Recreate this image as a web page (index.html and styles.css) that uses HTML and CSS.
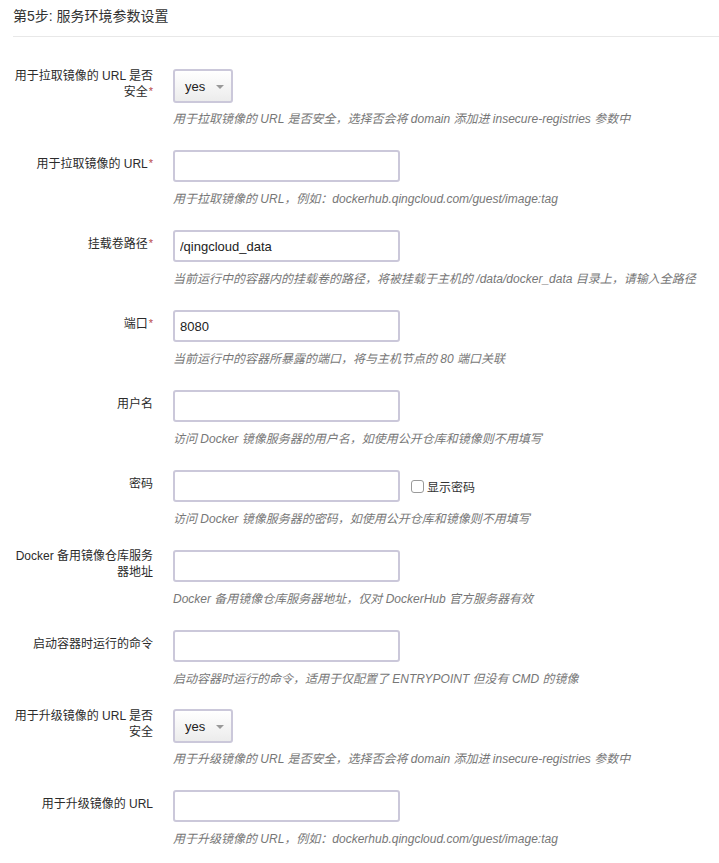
FILE: index.html
```html
<!DOCTYPE html>
<html lang="zh">
<head>
<meta charset="utf-8">
<title>第5步: 服务环境参数设置</title>
<link rel="stylesheet" href="styles.css">
</head>
<body>
<div class="page">
  <h3 class="step-title">第5步: 服务环境参数设置</h3>
  <div class="form">
    <div class="row">
      <label class="label"><span>用于拉取镜像的 URL 是否安全<span class="req">*</span></span></label>
      <div class="control">
        <div class="select"><span>yes</span><span class="caret"></span></div>
        <p class="help">用于拉取镜像的 URL 是否安全，选择否会将 domain 添加进 insecure-registries 参数中</p>
      </div>
    </div>
    <div class="row">
      <label class="label"><span>用于拉取镜像的 URL<span class="req">*</span></span></label>
      <div class="control">
        <input class="input" type="text" value="">
        <p class="help">用于拉取镜像的 URL，例如：dockerhub.qingcloud.com/guest/image:tag</p>
      </div>
    </div>
    <div class="row">
      <label class="label"><span>挂载卷路径<span class="req">*</span></span></label>
      <div class="control">
        <input class="input" type="text" value="/qingcloud_data">
        <p class="help">当前运行中的容器内的挂载卷的路径，将被挂载于主机的 /data/docker_data 目录上，请输入全路径</p>
      </div>
    </div>
    <div class="row">
      <label class="label"><span>端口<span class="req">*</span></span></label>
      <div class="control">
        <input class="input" type="text" value="8080">
        <p class="help">当前运行中的容器所暴露的端口，将与主机节点的 80 端口关联</p>
      </div>
    </div>
    <div class="row">
      <label class="label"><span>用户名</span></label>
      <div class="control">
        <input class="input" type="text" value="">
        <p class="help">访问 Docker 镜像服务器的用户名，如使用公开仓库和镜像则不用填写</p>
      </div>
    </div>
    <div class="row">
      <label class="label"><span>密码</span></label>
      <div class="control">
        <div class="inline">
          <input class="input" type="password" value="">
          <label class="show-pw"><span class="checkbox"></span>显示密码</label>
        </div>
        <p class="help">访问 Docker 镜像服务器的密码，如使用公开仓库和镜像则不用填写</p>
      </div>
    </div>
    <div class="row">
      <label class="label"><span>Docker 备用镜像仓库服务器地址</span></label>
      <div class="control">
        <input class="input" type="text" value="">
        <p class="help">Docker 备用镜像仓库服务器地址，仅对 DockerHub 官方服务器有效</p>
      </div>
    </div>
    <div class="row">
      <label class="label"><span>启动容器时运行的命令</span></label>
      <div class="control">
        <input class="input" type="text" value="">
        <p class="help">启动容器时运行的命令，适用于仅配置了 ENTRYPOINT 但没有 CMD 的镜像</p>
      </div>
    </div>
    <div class="row">
      <label class="label"><span>用于升级镜像的 URL 是否安全</span></label>
      <div class="control">
        <div class="select"><span>yes</span><span class="caret"></span></div>
        <p class="help">用于升级镜像的 URL 是否安全，选择否会将 domain 添加进 insecure-registries 参数中</p>
      </div>
    </div>
    <div class="row">
      <label class="label"><span>用于升级镜像的 URL</span></label>
      <div class="control">
        <input class="input" type="text" value="">
        <p class="help">用于升级镜像的 URL，例如：dockerhub.qingcloud.com/guest/image:tag</p>
      </div>
    </div>
  </div>
</div>
</body>
</html>
```
FILE: styles.css
```css
html, body {
  margin: 0;
  padding: 0;
  background: #fff;
}
body {
  font-family: "Liberation Sans", "Noto Sans CJK SC", sans-serif;
  color: #333;
  font-size: 12px;
}
.page {
  padding-left: 13px;
}
.step-title {
  margin: 0;
  padding: 6px 0 10px;
  font-size: 14px;
  line-height: 20px;
  font-weight: normal;
  color: #333;
  border-bottom: 1px solid #e8e8e8;
}
.form {
  padding-top: 33px;
}
.row {
  display: flex;
  align-items: flex-start;
  height: 80px;
}
.label {
  width: 140px;
  height: 32px;
  flex: none;
  display: flex;
  align-items: center;
  justify-content: flex-end;
  text-align: right;
  line-height: 16px;
  padding-bottom: 4px;
  box-sizing: border-box;
  color: #2b2b2b;
}
.req {
  color: #b94a48;
  font-size: 11px;
  line-height: 1;
  vertical-align: 1px;
  margin-left: 1px;
}
.control {
  margin-left: 20px;
}
.input {
  display: block;
  width: 227px;
  height: 32px;
  box-sizing: border-box;
  border: 2px solid #cbc8da;
  border-radius: 3px;
  padding: 0 5px;
  margin: 0;
  font-family: "Liberation Sans", "Noto Sans CJK SC", sans-serif;
  font-size: 13px;
  color: #222;
  background: #fff;
  outline: none;
}
.select {
  width: 60px;
  height: 34px;
  box-sizing: border-box;
  border: 2px solid #cbc8da;
  border-radius: 3px;
  background: linear-gradient(#fff, #ececec);
  display: flex;
  align-items: center;
  padding-left: 10px;
  font-size: 13px;
  color: #222;
  margin-top: -1px;
  margin-bottom: -1px;
}
.caret {
  width: 0;
  height: 0;
  border-left: 4px solid transparent;
  border-right: 4px solid transparent;
  border-top: 4px solid #999;
  margin-left: 11px;
  margin-top: 1px;
}
.help {
  margin: 8px 0 0;
  line-height: 18px;
  font-size: 12px;
  font-style: italic;
  color: #777;
  white-space: nowrap;
}
.inline {
  display: flex;
  align-items: center;
}
.show-pw {
  display: flex;
  align-items: center;
  margin-left: 11px;
  color: #333;
  font-size: 12px;
}
.checkbox {
  width: 11px;
  height: 11px;
  border: 1px solid #9a9a9a;
  border-radius: 3px;
  background: #fff;
  margin-right: 3px;
}
```
